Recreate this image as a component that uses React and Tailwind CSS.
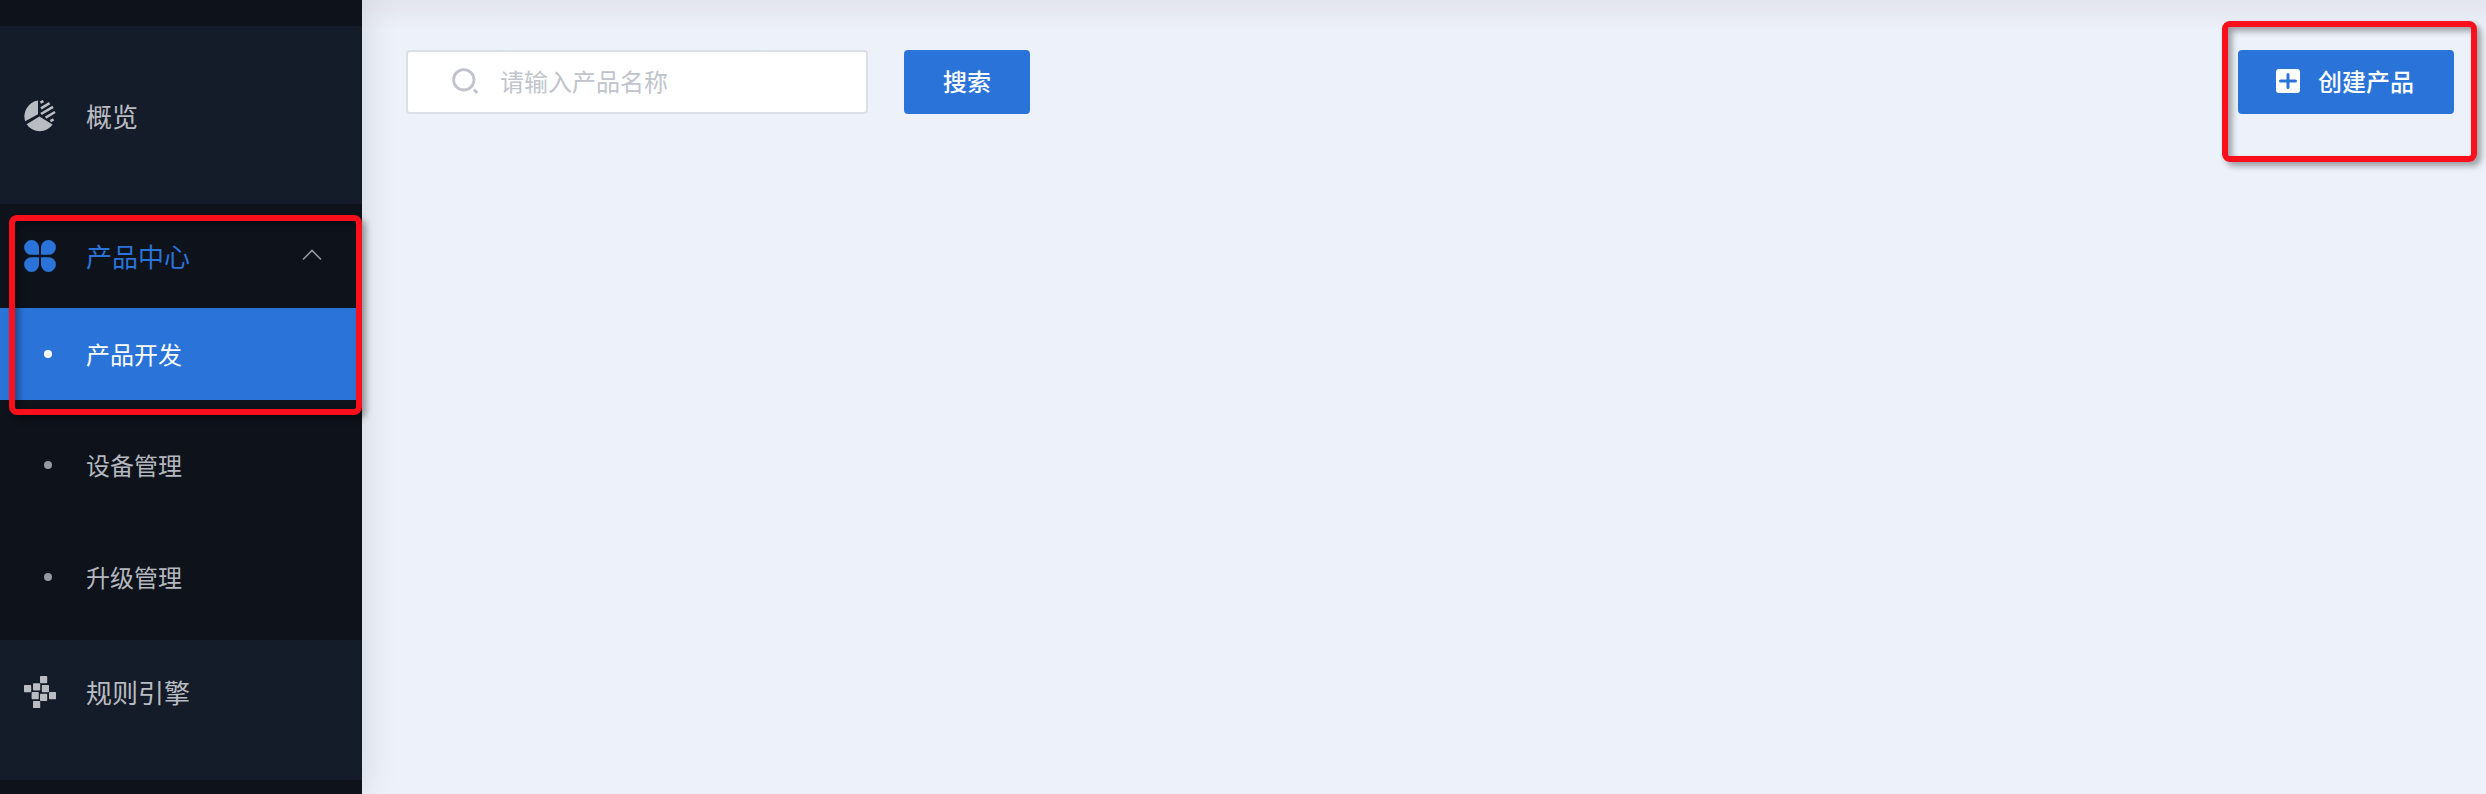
const callout =
  "pointer-events-none absolute rounded-lg border-[6px] border-[#fb0f1c] shadow-[4px_4px_6px_rgba(0,0,0,0.35),inset_4px_4px_6px_rgba(0,0,0,0.35)]";

function OverviewIcon() {
  return (
    <svg viewBox="0 0 32 32" className="size-8 shrink-0" fill="currentColor" aria-hidden="true">
      <path d="M14 0.6V14.2L1.2 21.2A15.8 15.8 0 0 1 14 0.6Z" />
      <path d="M15.4 16.6 28.6 24.4A15.6 15.6 0 0 1 2.6 24.2Z" />
      <g stroke="currentColor" strokeWidth="2.6">
        <path d="M16.4 2.6 19.4 1" />
        <path d="M17 8.4 25.6 3.2" />
        <path d="M17 14 29 6.8" />
        <path d="M21.6 17.6 31 12" />
        <path d="M26.4 21.2 29.6 19.4" />
      </g>
    </svg>
  );
}

function CloverIcon() {
  return (
    <svg viewBox="0 0 32 32" className="size-8 shrink-0" fill="currentColor" aria-hidden="true">
      <path d="M7.5 0A7.5 7.5 0 0 1 15 7.5V14.8H7.5A7.4 7.4 0 0 1 7.5 0Z" />
      <path d="M24.5 0A7.5 7.5 0 0 0 17 7.5V14.8H24.5A7.4 7.4 0 0 0 24.5 0Z" />
      <path d="M7.5 32A7.5 7.5 0 0 0 15 24.5V17.2H7.5A7.4 7.4 0 0 0 7.5 32Z" />
      <path d="M24.5 32A7.5 7.5 0 0 1 17 24.5V17.2H24.5A7.4 7.4 0 0 1 24.5 32Z" />
    </svg>
  );
}

const blocks = [
  [16, 0],
  [0, 9],
  [9, 7.2],
  [17.8, 9],
  [7.6, 16],
  [16, 17.8],
  [25, 16],
  [9, 25],
];

function RulesIcon() {
  return (
    <svg viewBox="0 0 32 32" className="size-8 shrink-0" fill="currentColor" aria-hidden="true">
      {blocks.map(([x, y]) => (
        <rect key={`${x}-${y}`} x={x} y={y} width="7.2" height="7.2" rx="0.8" />
      ))}
    </svg>
  );
}

function SubItem({ label, active }) {
  return (
    <li>
      <a
        href="#"
        aria-current={active ? "page" : undefined}
        className={
          "flex items-center pl-11 text-2xl " +
          (active ? "mb-[9px] h-[92px] bg-[#2a74d9] text-white" : "h-28 text-[#b4b7bd]")
        }
      >
        <span
          className={"mr-[34px] size-2 rounded-full " + (active ? "bg-white" : "bg-[#9498a3]")}
        />
        {label}
      </a>
    </li>
  );
}

function Sidebar() {
  return (
    <aside className="relative w-[362px] shrink-0 bg-[#0e121b] pt-[26px] text-[26px] text-[#b9bcc2]">
      <nav>
        <div className="bg-[#151c29] pt-[38px] pb-9">
          <a href="#" className="flex h-[104px] items-center gap-[30px] px-6">
            <OverviewIcon />
            <span className="pb-0.5">概览</span>
          </a>
        </div>
        <div className="relative pb-[7px]">
          <button
            type="button"
            aria-expanded="true"
            className="flex h-[104px] w-full items-center gap-[30px] pr-10 pl-6 text-[#2a74d9]"
          >
            <CloverIcon />
            <span className="pb-0.5">产品中心</span>
            <svg
              viewBox="0 0 20 12"
              className="mb-0.5 ml-auto h-3 w-5 text-[#9498a3]"
              fill="none"
              stroke="currentColor"
              strokeWidth="1.6"
              aria-hidden="true"
            >
              <path d="M1 10.5 10 1.5 19 10.5" />
            </svg>
          </button>
          <ul>
            <SubItem label="产品开发" active />
            <SubItem label="设备管理" />
            <SubItem label="升级管理" />
          </ul>
          <div className={callout + " top-[11px] right-0 left-[9px] h-[200px]"} />
        </div>
        <div className="bg-[#151c29] pb-9">
          <a href="#" className="flex h-[104px] items-center gap-[30px] px-6">
            <RulesIcon />
            <span className="pb-0.5">规则引擎</span>
          </a>
        </div>
      </nav>
    </aside>
  );
}

export default function App() {
  return (
    <div className="flex min-h-screen bg-[#edf1f9] font-['Noto_Sans_CJK_SC',sans-serif]">
      <div className="relative z-10 flex shadow-[0_0_36px_rgba(0,0,0,0.12)]">
        <Sidebar />
      </div>
      <main className="min-w-0 flex-1 bg-linear-to-b from-[#e1e4ec] to-[#edf1f9] to-[30px] pt-[50px] pr-8 pl-11">
        <div className="flex items-center justify-between">
          <form className="flex gap-9" onSubmit={(e) => e.preventDefault()}>
            <label className="flex h-16 w-[462px] items-center gap-[22px] rounded-sm border-2 border-[#dcdfe6] bg-white pb-0.5 pl-11">
              <svg
                viewBox="0 0 26 26"
                className="size-[26px] shrink-0 text-[#bfc3cc]"
                fill="none"
                stroke="currentColor"
                strokeWidth="2.8"
                aria-hidden="true"
              >
                <circle cx="11.8" cy="11.8" r="10.2" />
                <path d="M21.8 21.6 25.2 25" />
              </svg>
              <input
                type="text"
                aria-label="产品名称"
                placeholder="请输入产品名称"
                className="min-w-0 flex-1 bg-transparent text-2xl outline-none placeholder:text-[#c0c4cc]"
              />
            </label>
            <button
              type="submit"
              className="h-16 w-[126px] rounded-sm bg-[#2a74d9] pb-0.5 text-2xl font-medium text-white"
            >
              搜索
            </button>
          </form>
          <div className="relative">
            <button
              type="button"
              className="flex h-16 items-center gap-[18px] rounded-sm bg-[#2a74d9] pr-10 pb-0.5 pl-[38px] text-2xl font-medium text-white"
            >
              <svg viewBox="0 0 24 24" className="size-6" aria-hidden="true">
                <rect width="24" height="24" rx="3" fill="white" />
                <path d="M12 5.5V18.5M4.5 12H19.5" stroke="#2a74d9" strokeWidth="3" strokeLinecap="round" />
              </svg>
              创建产品
            </button>
            <div className={callout + " -top-[29px] -right-[23px] -left-4 h-[141px]"} />
          </div>
        </div>
      </main>
    </div>
  );
}
